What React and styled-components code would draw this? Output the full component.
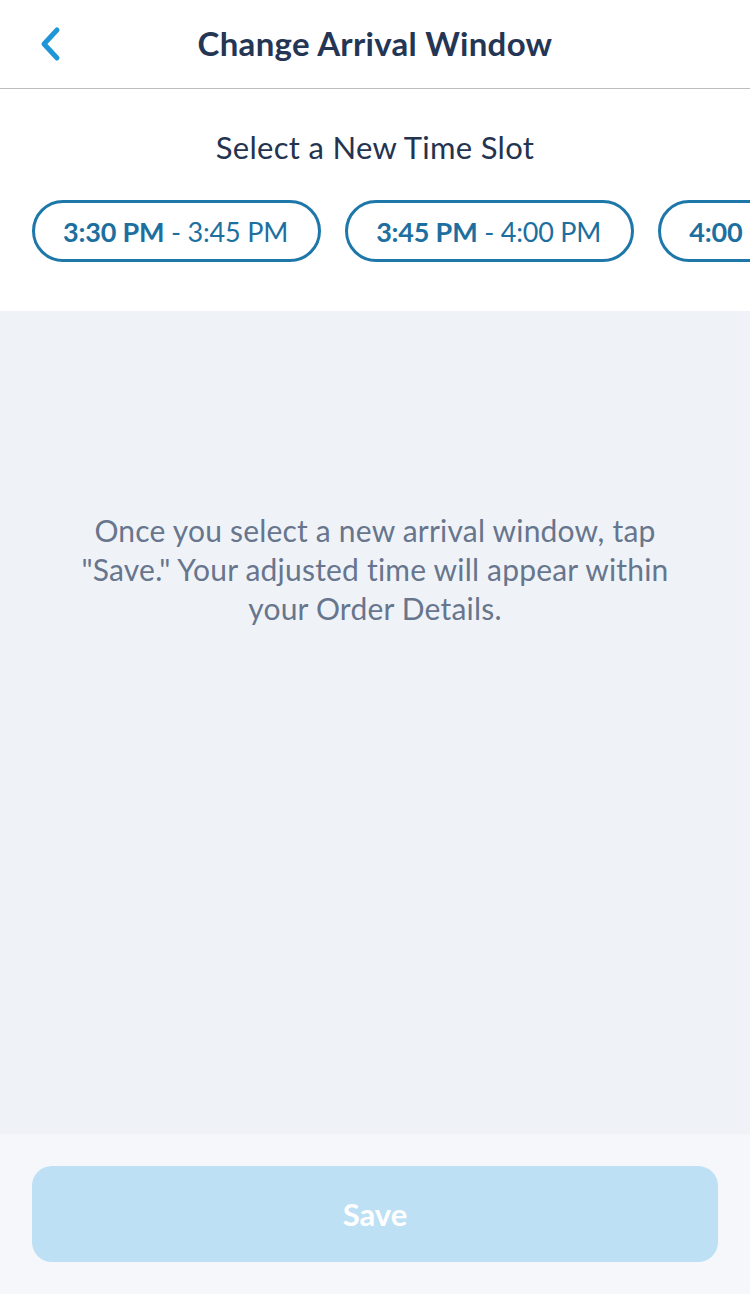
import styled, { createGlobalStyle } from "styled-components"

const Global = createGlobalStyle`
    html, body {
        margin: 0;
        padding: 0;
        font-family: Lato, "Open Sans", sans-serif;
        background: #ffffff;
    }
`

const Page = styled.div`
    width: 750px;
    height: 1294px;
    display: flex;
    flex-direction: column;
    overflow: hidden;
`

const Header = styled.div`
    height: 89px;
    box-sizing: border-box;
    border-bottom: 1px solid #bdbdbd;
    display: flex;
    align-items: center;
    justify-content: center;
    position: relative;
    background: #fff;
`

const BackButton = styled.button`
    position: absolute;
    left: 30px;
    top: 22px;
    width: 40px;
    height: 44px;
    border: none;
    background: none;
    padding: 0;
    display: flex;
    align-items: center;
    justify-content: center;
`

const Title = styled.h1`
    margin: 0 0 2px;
    font-size: 33px;
    font-weight: 700;
    color: #253655;
    letter-spacing: 0.3px;
`

const SlotSection = styled.div`
    background: #fff;
    padding: 39px 0 49px;
`

const SubTitle = styled.div`
    text-align: center;
    font-size: 31px;
    line-height: 38px;
    color: #243350;
    letter-spacing: 0.3px;
    margin-bottom: 34px;
`

const Slots = styled.div`
    display: flex;
    gap: 24px;
    padding-left: 32px;
    overflow: hidden;
`

const Slot = styled.div`
    flex-shrink: 0;
    height: 62px;
    box-sizing: border-box;
    padding: 0 30px 0 28px;
    border: 3px solid #1d77a9;
    border-radius: 31px;
    display: flex;
    align-items: center;
    font-size: 27px;
    color: #1d6fa0;
    letter-spacing: -0.2px;
    b {
        font-weight: 700;
    }
`

const Body = styled.div`
    flex: 1;
    background: #eff3f8;
    display: flex;
    justify-content: center;
    padding-top: 200px;
`

const Note = styled.p`
    margin: 0;
    width: 620px;
    text-align: center;
    font-size: 30px;
    line-height: 39px;
    color: #67758d;
    letter-spacing: 0.2px;
`

const Footer = styled.div`
    height: 160px;
    box-sizing: border-box;
    background: #f6f7fb;
    padding: 32px 32px;
`

const SaveButton = styled.button`
    width: 100%;
    height: 96px;
    border: none;
    border-radius: 20px;
    background: #bde0f5;
    color: #ffffff;
    font-family: inherit;
    font-size: 31px;
    font-weight: 700;
`

const slots = [
    ["3:30 PM", "3:45 PM"],
    ["3:45 PM", "4:00 PM"],
    ["4:00 PM", "4:15 PM"],
]

const App = () => {
    return (
        <Page>
            <Global />
            <Header>
                <BackButton>
                    <svg width="26" height="36" viewBox="0 0 26 36">
                        <path d="M20 4 L7 18 L20 32" fill="none" stroke="#2196d6" strokeWidth="5" strokeLinecap="round" strokeLinejoin="round" />
                    </svg>
                </BackButton>
                <Title>Change Arrival Window</Title>
            </Header>
            <SlotSection>
                <SubTitle>Select a New Time Slot</SubTitle>
                <Slots>
                    {slots.map(([from, to]) => (
                        <Slot key={from}>
                            <b>{from}</b>&nbsp;-&nbsp;{to}
                        </Slot>
                    ))}
                </Slots>
            </SlotSection>
            <Body>
                <Note>
                    Once you select a new arrival window, tap "Save." Your adjusted time will appear within your Order Details.
                </Note>
            </Body>
            <Footer>
                <SaveButton>Save</SaveButton>
            </Footer>
        </Page>
    )
}

export default App
